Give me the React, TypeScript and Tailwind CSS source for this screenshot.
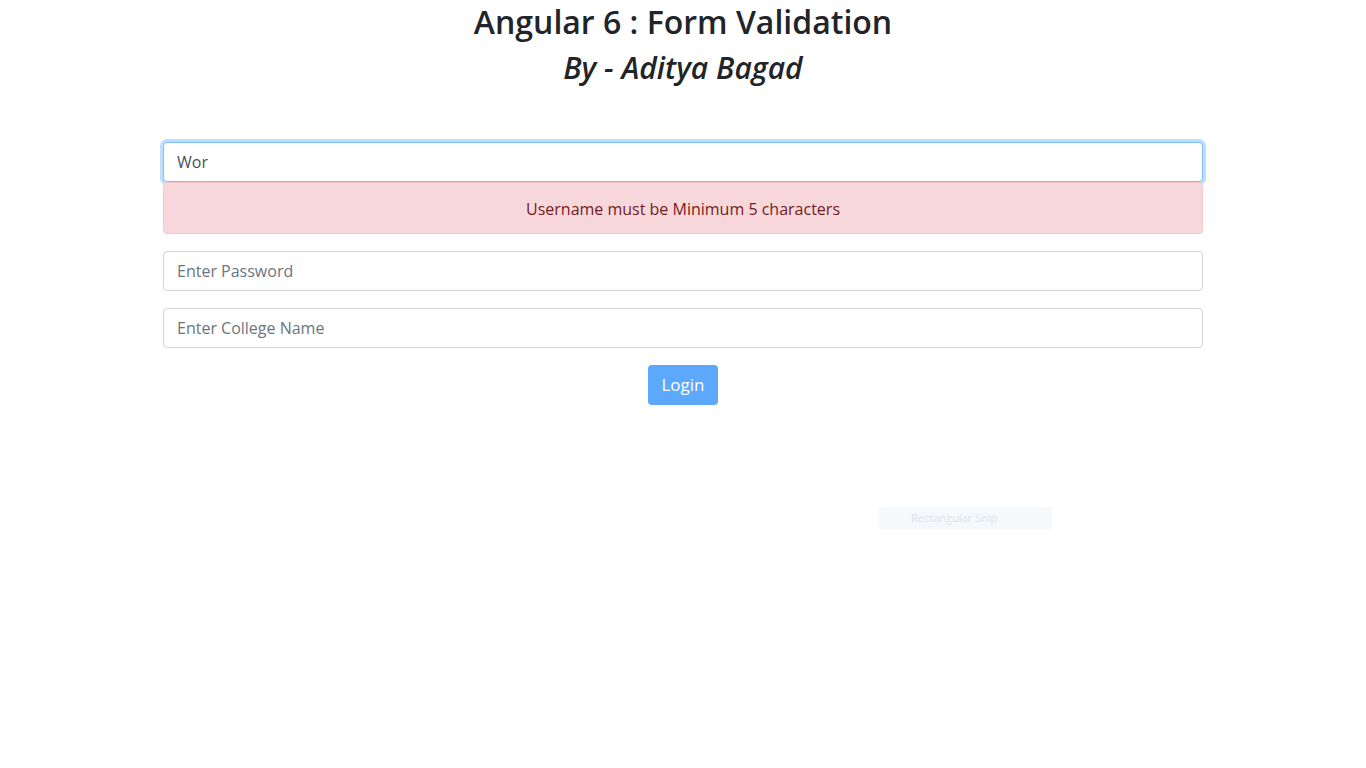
import React from "react";

function App() {
  return (
    <div className="relative min-h-[768px] bg-white text-[#212529] font-['Segoe_UI','Open_Sans',sans-serif]">
      <div className="text-center pt-[2px]">
        <h1 className="text-[32px] leading-[40px] font-semibold">
          Angular 6 : Form Validation
        </h1>
        <h2 className="text-[30px] leading-[52px] font-semibold italic">
          By - Aditya Bagad
        </h2>
      </div>
      <form className="w-[1040px] mx-auto mt-[48px]">
        <input
          type="text"
          defaultValue="Wor"
          autoFocus
          className="block w-full h-[40px] px-[13px] text-[16px] text-[#495057] caret-[#212529] bg-white border border-[#80bdff] rounded-[4px] outline-none shadow-[0_0_0_3px_rgba(0,123,255,0.25)]"
        />
        <div className="h-[52px] pt-[1px] flex items-center justify-center bg-[#f8d7da] border border-[#f5c6cb] rounded-[4px] text-[#721c24] text-[16px]">
          Username must be Minimum 5 characters
        </div>
        <input
          type="password"
          placeholder="Enter Password"
          className="block w-full h-[40px] mt-[17px] px-[13px] text-[16px] text-[#495057] placeholder:text-[#6c757d] bg-white border border-[#ced4da] rounded-[4px] outline-none"
        />
        <input
          type="text"
          placeholder="Enter College Name"
          className="block w-full h-[40px] mt-[17px] px-[13px] text-[16px] text-[#495057] placeholder:text-[#6c757d] bg-white border border-[#ced4da] rounded-[4px] outline-none"
        />
        <div className="flex justify-center mt-[17px]">
          <button
            type="button"
            className="w-[70px] h-[40px] rounded-[4px] bg-[#5ba8fd] text-white text-[17px]"
          >
            Login
          </button>
        </div>
      </form>
      <div className="absolute left-[879px] top-[507px] w-[173px] h-[22px] bg-[#f6f9fc] text-[11px] text-[#dbe3ea] flex items-center pl-[32px]">
        Rectangular Snip
      </div>
    </div>
  );
}

export default App;
